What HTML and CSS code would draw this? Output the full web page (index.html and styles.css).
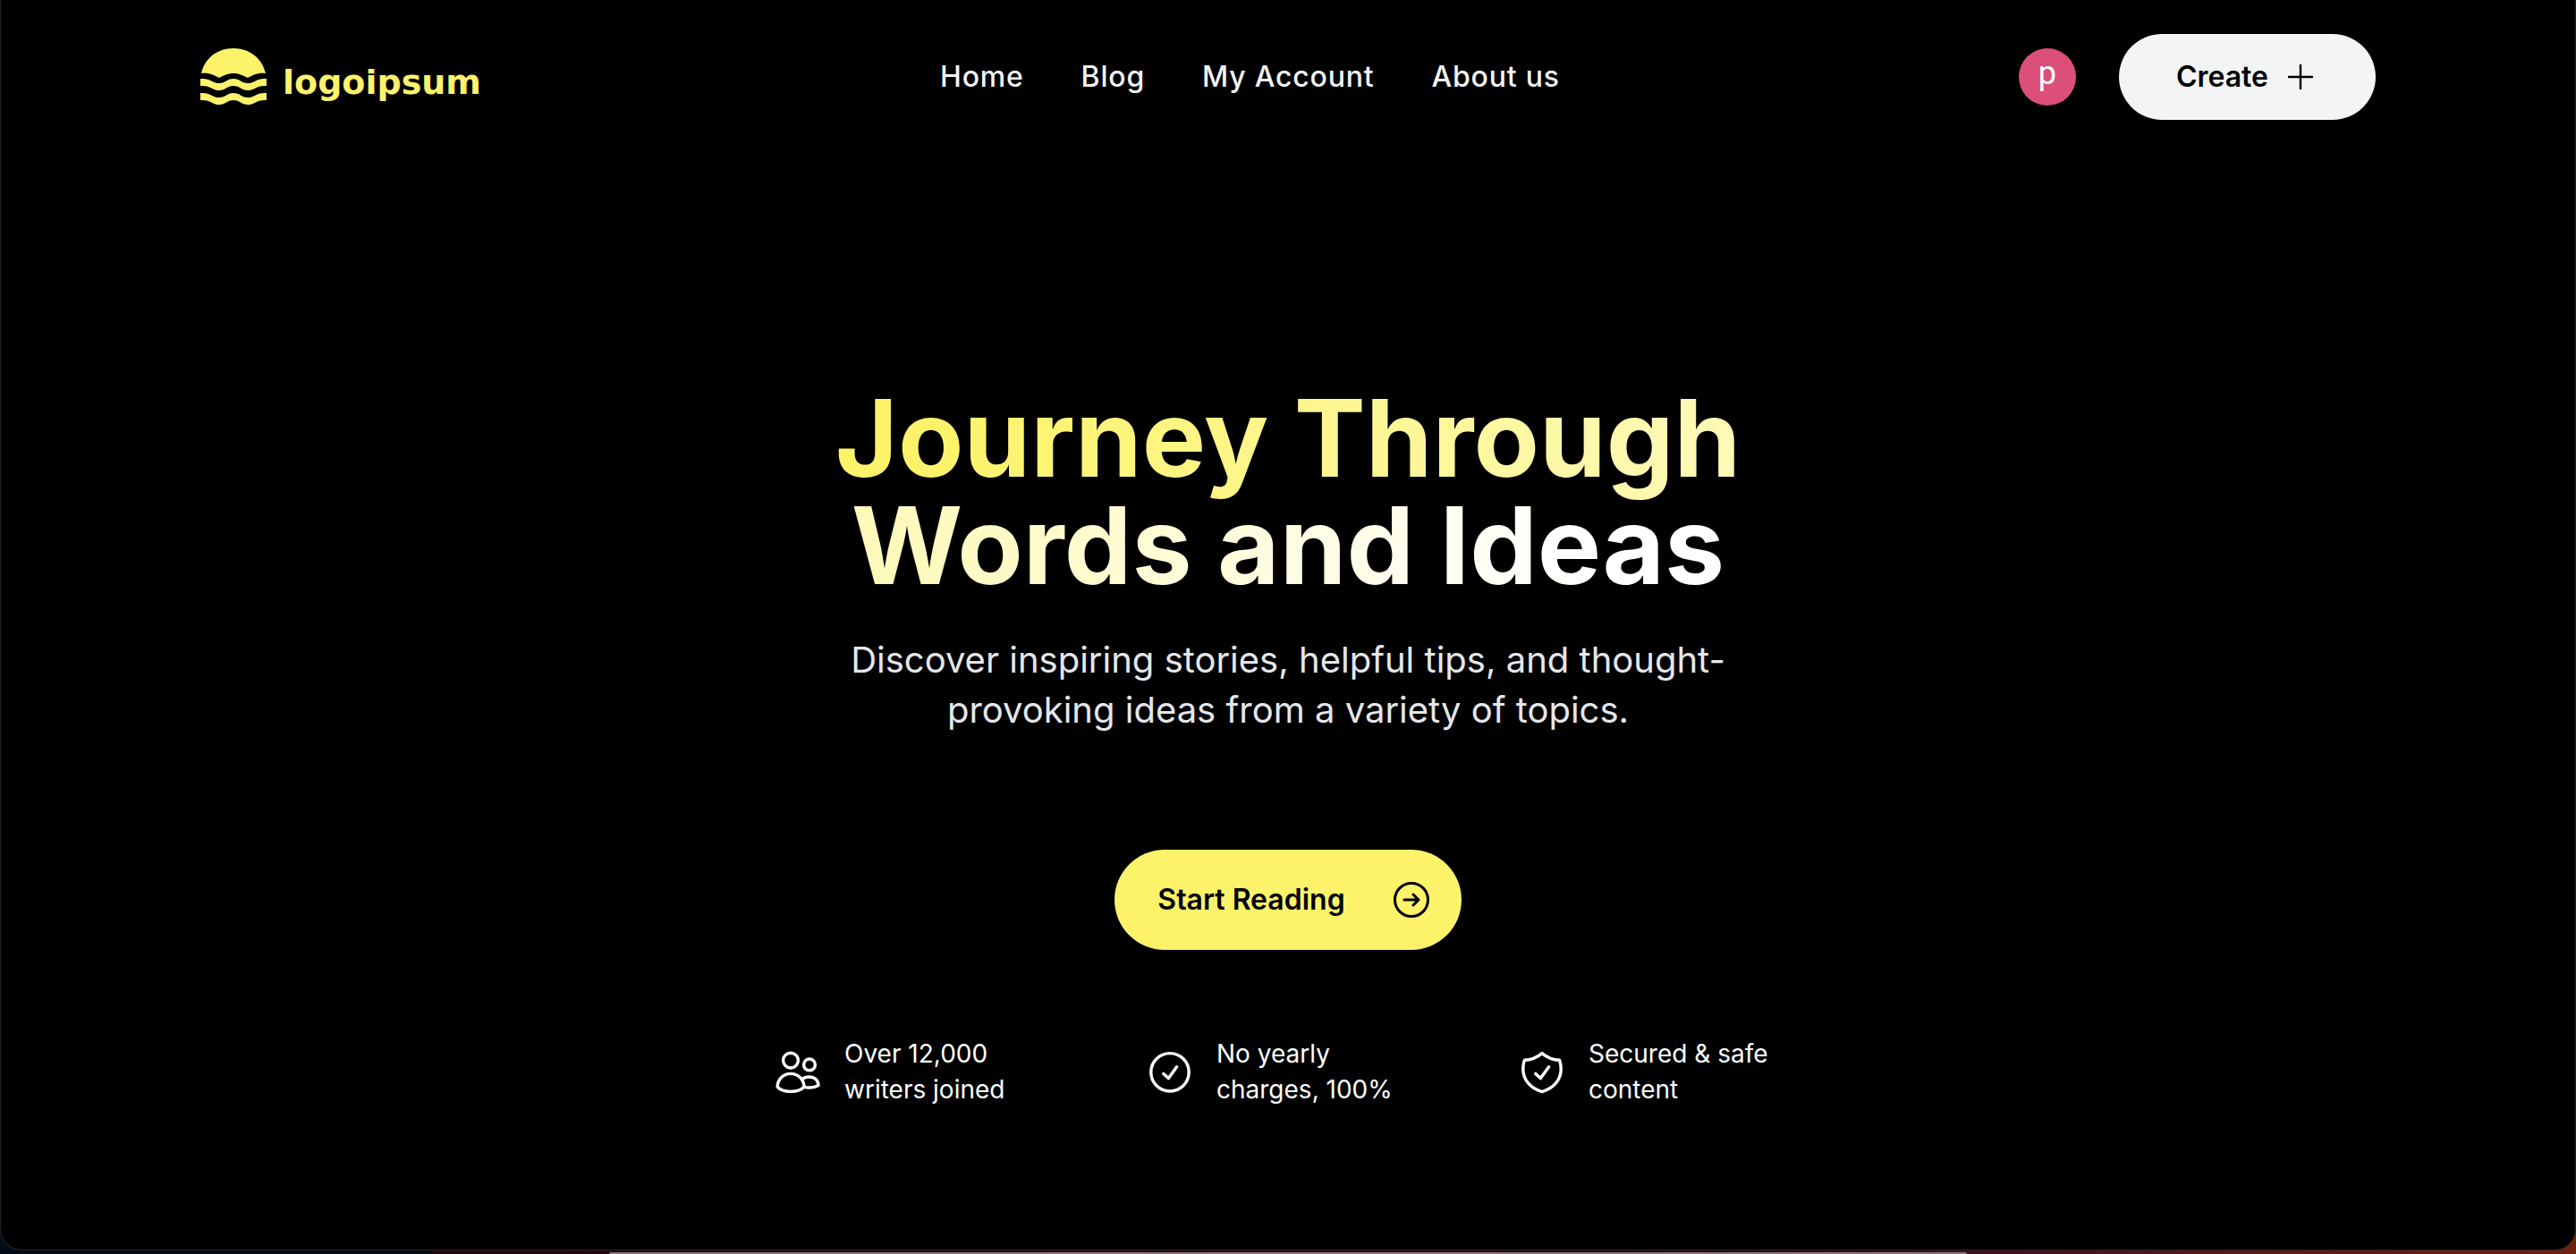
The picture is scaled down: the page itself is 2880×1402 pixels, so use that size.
FILE: index.html
```html
<!DOCTYPE html>
<html lang="en">
<head>
<meta charset="utf-8">
<title>Logoipsum</title>
<link rel="stylesheet" href="styles.css">
</head>
<body>
<div class="window">
  <header class="header">
    <a class="logo" href="#">
      <svg class="logo-mark" viewBox="0 0 74 66" fill="currentColor" aria-hidden="true">
        <path d="M1 29C5 12 19 1 37 1s32 11 36 28c-9-1-14 2-20 5-6-3-10-5-16-5s-10 2-16 5C15 31 10 28 1 29Z"/>
        <path d="M0 35c11-1 13 5 21 5 7 0 9-5 16-5s9 5 16 5c8 0 10-6 21-5v8c-11-1-13 5-21 5-7 0-9-5-16-5s-9 5-16 5c-8 0-10-6-21-5Z"/>
        <path d="M0 51c11-1 13 5 21 5 7 0 9-5 16-5s9 5 16 5c8 0 10-6 21-5v8c-11-1-13 5-21 5-7 0-9-5-16-5s-9 5-16 5c-8 0-10-6-21-5Z"/>
      </svg>
      <span class="logo-text">logoipsum</span>
    </a>
    <nav class="nav">
      <a href="#">Home</a>
      <a href="#">Blog</a>
      <a href="#">My Account</a>
      <a href="#">About us</a>
    </nav>
    <div class="actions">
      <button class="avatar" type="button" aria-label="Account">p</button>
      <button class="create" type="button">Create
        <svg class="icon-plus" viewBox="0 0 20 20" fill="none" stroke="currentColor" stroke-linecap="round" aria-hidden="true"><path d="M10 3.500v13M3.500 10h13"/></svg>
      </button>
    </div>
  </header>
  <main class="hero">
    <h1 class="title"><span>Journey Through<br>Words and Ideas</span></h1>
    <p class="lead">Discover inspiring stories, helpful tips, and thought-provoking ideas from a variety of topics.</p>
    <button class="start" type="button">Start Reading
      <svg class="icon-arrow" viewBox="0 0 24 24" fill="none" stroke="currentColor" stroke-linecap="round" stroke-linejoin="round" aria-hidden="true"><circle cx="12" cy="12" r="9.250"/><path d="M8 12h8M13 9l3 3-3 3"/></svg>
    </button>
    <ul class="features">
      <li class="feature">
        <svg class="icon-feature" viewBox="0 0 28 28" fill="none" stroke="currentColor" stroke-linejoin="round" aria-hidden="true"><circle cx="10" cy="7.800" r="4.200"/><circle cx="20.500" cy="10.200" r="3.200"/><path d="M2.600 22.600C2.600 18.500 5.800 15.200 10 15.200s7.500 3.300 7.500 7.400C16 24.300 13.500 25.200 10 25.200s-6-.9-7.400-2.600Z"/><path d="M16.600 18c1.100-.7 2.300-1 3.700-1 2.900 0 5.200 1.800 5.200 4.800-1.400.8-3 1.200-5 1.200-1.100 0-2.100-.1-3-.3"/></svg>
        <span>Over 12,000 writers joined</span>
      </li>
      <li class="feature">
        <svg class="icon-feature" viewBox="0 0 28 28" fill="none" stroke="currentColor" stroke-linecap="round" stroke-linejoin="round" aria-hidden="true"><circle cx="14" cy="14.400" r="10.600"/><path d="M10.400 15.200l2.800 2.600 4.600-6.400"/></svg>
        <span>No yearly charges, 100%</span>
      </li>
      <li class="feature">
        <svg class="icon-feature" viewBox="0 0 28 28" fill="none" stroke="currentColor" stroke-linecap="round" stroke-linejoin="round" aria-hidden="true"><path d="M14 3.800c3 2.500 6 3.800 9.800 3.800.6 1.700.8 3.300.8 5 0 6-4 10.700-10.600 12.700C7.400 23.300 3.400 18.600 3.400 12.600c0-1.700.2-3.300.8-5 3.800 0 6.800-1.300 9.800-3.800Z"/><path d="M10.400 15.200l2.800 2.600 4.600-6.400"/></svg>
        <span>Secured &amp; safe content</span>
      </li>
    </ul>
  </main>
</div>
<div class="dock"></div>
</body>
</html>
```
FILE: styles.css
```css
* { box-sizing: border-box; }

body {
  margin: 0;
  min-height: 100vh;
  display: flex;
  flex-direction: column;
  overflow: hidden;
  background: linear-gradient(90deg, #020c16 0 480px, #280614 484px, #24081a 65%, #400d22 77%, #5a1a14 88%, #70200e 100%);
  color: #f3f4f6;
  font-family: Inter, "Liberation Sans", sans-serif;
}

button { border: 0; font: inherit; cursor: pointer; }
a { color: inherit; text-decoration: none; }
svg { flex: none; }

.window {
  flex: 1;
  border: solid #242424;
  border-width: 0 1px 1px;
  border-radius: 0 0 24px 24px;
  background: #000;
}

.header {
  display: flex;
  align-items: center;
  justify-content: space-between;
  max-width: 2432px;
  margin: 0 auto;
  padding-top: 38px;
}

.logo { display: flex; align-items: center; gap: 18px; color: #fcf36b; }
.logo-mark { width: 74px; height: 66px; }
.logo-text { padding-top: 12px; font: 700 38px/48px "DejaVu Sans", sans-serif; }

.nav { display: flex; gap: 64px; font-size: 32px; font-weight: 500; line-height: 48px; letter-spacing: 0.025em; }

.actions { display: flex; align-items: center; gap: 48px; }

.avatar {
  width: 64px;
  height: 64px;
  padding: 0 0 8px;
  border-radius: 50%;
  background: #db4f79;
  color: #fff;
  font: 400 36px/40px Roboto, sans-serif;
}

.create {
  display: flex;
  align-items: center;
  gap: 16px;
  padding: 24px 64px;
  border-radius: 48px;
  background: #f3f4f6;
  color: #000;
  font-size: 32px;
  font-weight: 600;
  line-height: 48px;
}
.icon-plus { width: 40px; height: 40px; stroke-width: 1.2; }

.hero {
  display: flex;
  flex-direction: column;
  align-items: center;
  padding: 296px 32px 0;
}

.title {
  margin: 0;
  font-size: 120px;
  font-weight: 700;
  line-height: 120px;
  text-align: center;
}

/* Inline, so the gradient runs on from the first line to the second */
.title span {
  background: linear-gradient(90deg, #fcf36b 6%, #fff 92%);
  background-clip: text;
  color: transparent;
}

.lead {
  max-width: 1024px;
  margin: 40px 0 0;
  color: #e5e7eb;
  font-size: 40px;
  line-height: 56px;
  text-align: center;
}

.start {
  display: flex;
  align-items: center;
  gap: 50px;
  margin-top: 128px;
  padding: 32px 32px 32px 48px;
  border-radius: 56px;
  background: #fcf36b;
  color: #000;
  font-size: 32px;
  font-weight: 600;
  line-height: 48px;
}
.icon-arrow { width: 48px; height: 48px; stroke-width: 1.5; }

.features {
  display: grid;
  grid-template-columns: repeat(3, 320px);
  gap: 96px;
  margin: 96px 0 0;
  padding: 0;
  list-style: none;
  color: #fff;
  font-size: 28px;
  line-height: 40px;
}
.feature { display: flex; align-items: center; gap: 24px; }
.feature span { max-width: 208px; }
.icon-feature { width: 56px; height: 56px; stroke-width: 1.7; }

.dock {
  width: 52.7%;
  height: 2px;
  margin: 2px auto 0;
  border-radius: 2px 2px 0 0;
  background: #8c7479;
}
```
